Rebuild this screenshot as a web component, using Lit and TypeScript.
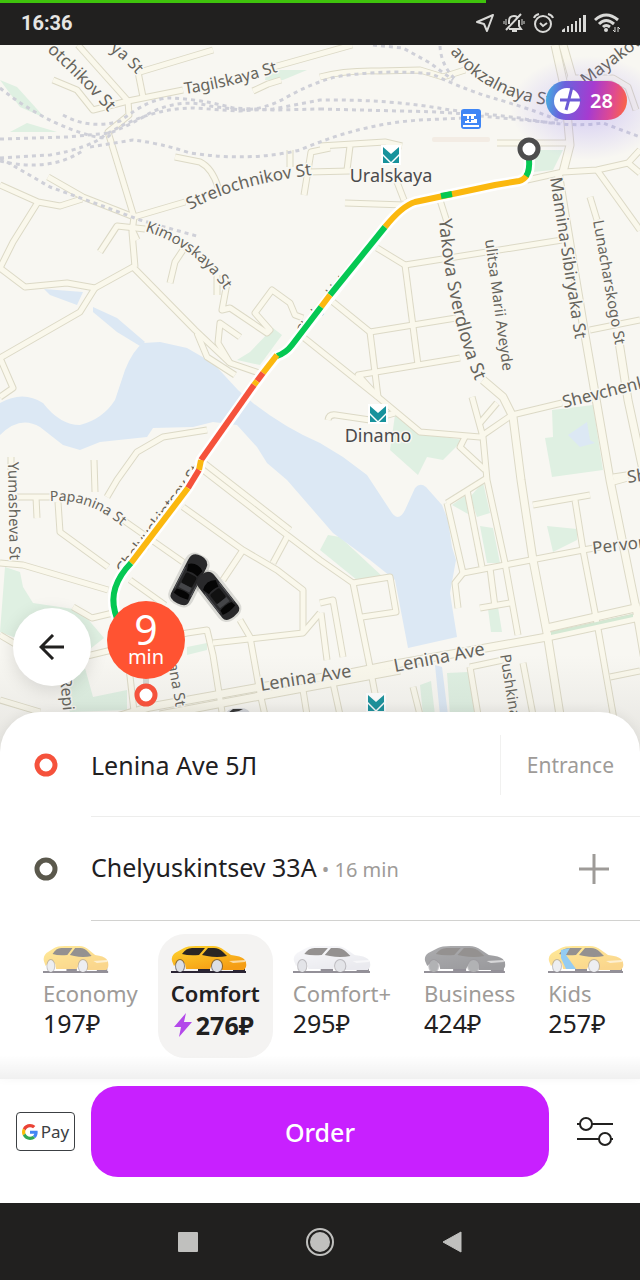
import { LitElement, html, svg, css } from "lit";
import { customElement, property, state } from "lit/decorators.js";

/* ---------- map data ---------- */

const MINOR: string[] = [
  "M53 80 L77 90 L93 110 L128 101 L183 90",
  "M78 45 L128 101",
  "M140 72 L213 50",
  "M138 72 L143 97",
  "M270 68 L320 54 L352 45",
  "M253 91 L268 84 L281 80",
  "M128 101 L129 115 L108 132 L134 217 L185 202",
  "M134 217 L132 232 L135 267",
  "M0 185 L38 202 L60 206 L82 199",
  "M48 177 L83 197 L134 217",
  "M38 202 L13 242 L0 268",
  "M100 252 L117 226 L145 229",
  "M130 225 L137 240",
  "M175 157 L200 162 Q212 168 218 187",
  "M290 150 L290 167",
  "M330 148 L311 152 L304 195",
  "M308 172 L350 171",
  "M320 146 L385 142 L402 146",
  "M350 146 L347 170",
  "M320 77 Q345 70 380 71 L420 70 L443 77 L465 70",
  "M568 78 L613 78 L628 87 L636 110",
  "M497 143 L567 143",
  "M527 180 L563 172 L597 170 L628 163 L640 150",
  "M628 163 L640 173",
  "M597 170 L640 230",
  "M590 197 L597 220",
  "M345 203 L405 205",
  "M397 182 L404 200",
  "M440 200 L447 222",
  "M377 248 L405 265 L562 240",
  "M405 265 L418 365",
  "M333 302 L370 332 L456 318",
  "M370 332 L378 397",
  "M378 397 L358 375 L460 358",
  "M303 337 L378 397 L420 432 L480 437 L512 415",
  "M512 415 L562 403",
  "M472 397 L483 437 L487 480 L505 563 L518 635",
  "M480 423 L497 403",
  "M465 437 L460 447 L485 470",
  "M328 420 Q329 414 336 415 L370 420 L395 413",
  "M590 330 L640 320",
  "M613 477 L640 473",
  "M0 268 L25 287 L67 283 L95 288 L133 267 L195 330 L230 363 L262 374",
  "M95 288 L80 312 L0 358 L13 388 L0 397",
  "M197 333 L207 357 L235 375",
  "M170 283 L175 262 L183 250",
  "M217 295 L217 275",
  "M227 283 L222 310 L230 308 L267 333 L270 330 L255 313 L272 290 L290 303 L295 315 L303 318",
  "M230 363 L218 343 L220 323 L240 337",
  "M207 430 L163 437 L137 452 L117 480 L107 497",
  "M94 460 L95 492",
  "M17 497 L50 497",
  "M36 497 L37 518",
  "M58 502 L60 532 L108 567",
  "M11 457 L11 470",
  "M123 520 L183 562",
  "M183 507 L243 550 L277 570 L303 590 L303 633",
  "M203 470 L287 535 L320 560 L353 583 L370 667 L379 715",
  "M204 463 L290 530",
  "M353 583 L390 577 L396 612 L362 617",
  "M287 537 L273 563",
  "M243 550 L223 580",
  "M0 563 L23 565 L108 590",
  "M130 580 L165 605",
  "M73 607 L92 618 L113 613",
  "M0 635 L17 645",
  "M83 657 L120 648 L187 633 L207 630 L213 655 L222 712",
  "M213 643 L303 633 L320 613",
  "M240 620 L250 637 L260 693 L266 720",
  "M127 650 L135 720",
  "M447 503 L487 478",
  "M447 503 L463 573 L583 550 L600 547",
  "M467 490 L482 567",
  "M463 573 L455 583 L458 608",
  "M490 568 L495 607",
  "M480 608 L510 603",
  "M533 505 L590 495",
  "M575 500 L583 550 L597 623 L615 725",
  "M610 677 L640 671",
  "M470 667 L503 660",
  "M470 667 L478 715",
  "M523 663 L533 715",
  "M413 687 L420 715",
  "M320 603 L333 600 L343 657",
  "M321 613 L327 660",
  "M333 683 L340 715",
  "M303 690 L307 715",
  "M0 700 L40 712",
  "M610 483 L628 478",
];

const MAJOR: string[] = [
  "M555 45 L565 90 L570 145 L563 172",
  "M563 45 L573 80",
  "M558 172 L585 335 L610 480 L637 613 L645 660",
  "M618 335 L628 400 L643 470",
  "M483 380 L503 397 L513 417 L521 480 L533 560 L547 633 L560 715",
  "M100 722 L150 707 L260 687 L350 673 L390 665 L480 649 L547 637 L640 617",
  "M547 628 L640 607",
  "M160 715 L260 696 L400 670",
];

const RAILS: string[] = [
  "M0 88 Q37 117 73 130 T110 134",
  "M63 115 Q90 130 120 121 Q150 98 170 98 Q200 99 233 108 L273 110 L320 109",
  "M0 139 L67 137 L110 133 Q130 125 150 113 Q180 98 210 106 L240 110 Q265 110 287 97 Q310 84 335 77 Q385 69 432 74 Q470 92 500 100 Q540 112 562 122",
  "M0 158 L50 155 Q90 148 105 135 Q150 108 193 108 L240 111 L273 109 L320 100 Q390 99 450 110 L520 118 Q570 128 603 123 L640 137",
  "M0 161 Q50 173 84 150",
  "M90 147 L133 140 Q160 143 190 153 Q250 162 300 150 Q360 124 420 120 L465 118",
  "M0 158 L50 187 L100 205 L140 220 L200 237",
  "M320 109 L400 111 Q460 112 480 116 L555 123",
  "M373 45 L403 48 L430 63 L453 80",
  "M440 46 Q441 65 455 79",
];

const PARKS: string[] = [
  "M0 80 L17 87 L45 118 L20 107Z",
  "M10 132 L27 123 L57 132Z",
  "M267 70 L307 70 L283 80 L265 80Z",
  "M537 150 L563 150 L553 170 L533 172Z",
  "M273 328 L282 335 L260 365 L237 360 L250 352Z",
  "M395 415 L420 433 L463 440 L443 460 L427 457 L418 475 L390 450Z",
  "M552 410 L593 405 L603 470 L552 477 L545 438 L553 437Z",
  "M5 567 L20 572 L23 587 L33 603 L80 610 L104 638 L76 660 L0 632Z",
  "M60 693 L85 668 L93 697 L127 690 L127 710 L70 712Z",
  "M187 647 L207 643 L207 650 L187 655Z",
  "M328 535 L340 537 L383 577 L357 580 L320 550Z",
  "M452 505 L466 495 L468 514Z",
  "M470 497 L483 482 L490 513 L477 517Z",
  "M480 526 L493 528 L500 563 L487 563Z",
  "M547 526 L577 529 L577 540 L553 552Z",
  "M488 609 L498 607 L502 632 L491 632Z",
  "M447 673 L468 672 L475 715 L450 715Z",
  "M420 685 L431 681 L435 715 L423 715Z",
];

const WATER: string[] = [
  "M0 403 Q23 390 43 403 Q60 425 80 425 Q103 419 115 400 L125 370 Q133 350 143 343 L160 342 L187 348 L213 363 L238 390 L253 403 Q285 428 320 443 L343 457 L367 475 L390 510 Q398 524 405 510 L415 488 Q420 482 426 487 L442 505 L448 520 L452 547 L456 560 L450 593 L457 637 L408 648 L395 580 L370 560 L333 533 L320 518 L287 480 L267 463 L257 447 L237 425 L213 422 L193 427 L153 428 L147 437 L100 442 L80 450 L63 445 L40 427 Q20 415 0 435Z",
  "M44 289 L83 292 L77 305 L50 295Z",
  "M93 307 L117 318 L145 342 L140 346 L117 332 L93 312Z",
  "M435 665 L442 667 L448 715 L440 715Z",
  "M568 435 L587 422 L590 440 L595 443 L580 447Z",
];

const ROUTE_LINE =
  "M529 158 Q531 178 519 181 L495 185 L415 202 Q402 206 385 227 L292 345 Q286 354 277 356 L263 373 L201 460 L199 470 L188 488 L131 563 Q108 587 115 612 L120 628";

const ROUTE: { tone: "green" | "amber" | "red"; d: string }[] = [
  { tone: "amber", d: "M527 175 Q524 180 519 181 L495 185 L415 202 Q402 206 385 227" },
  { tone: "green", d: "M529 158 Q530 171 526 176" },
  { tone: "green", d: "M452 194 L441 196" },
  { tone: "green", d: "M385 227 L330 295" },
  { tone: "amber", d: "M330 295 L321 307" },
  { tone: "green", d: "M321 307 L292 345 Q286 353 277 356" },
  { tone: "amber", d: "M277 355 L263 373" },
  { tone: "red", d: "M263 373 L257 381" },
  { tone: "amber", d: "M257 381 L254 385" },
  { tone: "red", d: "M254 385 L201 460" },
  { tone: "amber", d: "M201 460 L199 470" },
  { tone: "red", d: "M199 470 L188 488" },
  { tone: "amber", d: "M188 488 L131 563" },
  { tone: "green", d: "M131 563 Q108 587 115 612 L120 628" },
];

const STREETS: { id: string; d: string; size: number; text: string }[] = [
  { id: "s1", d: "M47 51 Q75 76 114 118", size: 17, text: "otchikov St" },
  { id: "s2", d: "M110 51 Q126 60 148 88", size: 16, text: "ya St" },
  { id: "s3", d: "M185 94 Q240 86 300 64", size: 16, text: "Tagilskaya St" },
  { id: "s4", d: "M190 210 Q240 182 330 173", size: 17, text: "Strelochnikov St" },
  { id: "s5", d: "M145 231 Q200 248 231 300", size: 15, text: "Kimovskaya St" },
  { id: "s6", d: "M450 52 Q490 104 570 107", size: 17, text: "avokzalnaya St" },
  { id: "s7", d: "M586 86 L652 36", size: 17, text: "Mayakovskogo" },
  { id: "s8", d: "M550 178 L576 345", size: 17, text: "Mamina-Sibiryaka St" },
  { id: "s9", d: "M593 221 L616 350", size: 15, text: "Lunacharskogo St" },
  { id: "s10", d: "M439 219 Q448 325 484 400", size: 18, text: "Yakova Sverdlova St" },
  { id: "s11", d: "M485 240 L504 380", size: 15, text: "ulitsa Marii Aveyde" },
  { id: "s12", d: "M564 408 L660 384", size: 17, text: "Shevchenko" },
  { id: "s13", d: "M628 483 L700 473", size: 17, text: "Shein" },
  { id: "s14", d: "M593 554 L700 541", size: 17, text: "Pervomay" },
  { id: "s15", d: "M8 462 L10 570", size: 15, text: "Yumasheva St" },
  { id: "s16", d: "M50 501 Q95 498 130 534", size: 14, text: "Papanina St" },
  { id: "s17", d: "M261 691 L400 669", size: 18, text: "Lenina Ave" },
  { id: "s18", d: "M395 672 L520 648", size: 18, text: "Lenina Ave" },
  { id: "s19", d: "M500 655 L517 760", size: 15, text: "Pushkina" },
  { id: "s20", d: "M168 664 L180 730", size: 15, text: "ana St" },
  { id: "s21", d: "M60 678 L68 760", size: 16, text: "Repi" },
  { id: "s22", d: "M124 575 L205 466", size: 16, text: "Chelyuskintsev St" },
  { id: "s23", d: "M303 335 L401 210", size: 13, text: "Chelyuskintsev" },
];

const metroMark = (x: number, y: number) => svg`
  <g transform="translate(${x} ${y})">
    <rect class="halo" x="-10" y="-10" width="20" height="20" />
    <path class="metro" d="M-8 -8 L0 -1 L8 -8 V-1 L0 7 L-8 -1Z M-8 1 L-1 8 H-8Z M8 1 L1 8 H8Z" />
  </g>`;

const mapCar = (x: number, y: number, angle: number) => svg`
  <g transform="translate(${x} ${y}) rotate(${angle})">
    <rect class="car-shade" x="-13" y="-28" width="26" height="56" rx="10" />
    <path d="M-10 -18 Q-10 -27 0 -27 Q10 -27 10 -18 V20 Q10 26 0 26 Q-10 26 -10 20Z" fill="#29292b" />
    <path d="M-8 -14 Q0 -20 8 -14 L6 -7 Q0 -9 -6 -7Z" fill="#050505" />
    <rect x="-6" y="-6" width="12" height="12" rx="2" fill="#111" />
    <path d="M-6 6 H6 V11 H-6Z" fill="#444548" />
    <path d="M-7 13 Q0 11 7 13 L8 18 Q0 20 -8 18Z" fill="#050505" />
    <path d="M-9 -10 V14 M9 -10 V14" stroke="#55565a" stroke-width="1" />
  </g>`;

@customElement("city-map")
export class CityMap extends LitElement {
  static styles = css`
    :host { display: block; height: 100%; }
    svg { display: block; width: 100%; height: 100%; }
    .land { fill: #f8f7f2; }
    .water { fill: #dce8f4; }
    .park { fill: #dff0e2; }
    .case, .fill, .rail, .route-case, .route { fill: none; stroke-linejoin: round; }
    .case { stroke: #dcd9c6; stroke-width: 7; }
    .fill { stroke: #faf8ec; stroke-width: 5; }
    .wide.case { stroke-width: 9; }
    .wide.fill { stroke-width: 7; }
    .rail { stroke: #cfd0d8; stroke-width: 3; stroke-dasharray: 4 4; }
    .route-case { stroke: #fff; stroke-width: 11; }
    .route { stroke-width: 6; }
    .green { stroke: #05c853; }
    .amber { stroke: #fbb80f; }
    .red { stroke: #f5523c; }
    text {
      font-family: "Noto Sans", sans-serif; fill: #66645c;
      stroke: #f8f7f2; stroke-width: 3; paint-order: stroke; stroke-linejoin: round;
    }
    .station { font-size: 18px; fill: #4b4a4c; text-anchor: middle; }
    .halo { fill: #fff; }
    .metro { fill: #17929c; }
    .car-shade { fill: #000; opacity: 0.12; }
    .minutes { font-size: 41px; fill: #fff; stroke: none; text-anchor: middle; }
    .unit { font-size: 20px; fill: #fff; stroke: none; text-anchor: middle; }
  `;

  render() {
    return html`<svg viewBox="0 45 640 707" preserveAspectRatio="xMidYMax slice" role="img" aria-label="Route map">
      <rect class="land" x="-400" y="-400" width="1440" height="1600" />
      ${PARKS.map((d) => svg`<path class="park" d=${d} />`)}
      ${WATER.map((d) => svg`<path class="water" d=${d} />`)}
      ${MINOR.map((d) => svg`<path class="case" d=${d} />`)}
      ${MAJOR.map((d) => svg`<path class="case wide" d=${d} />`)}
      ${MINOR.map((d) => svg`<path class="fill" d=${d} />`)}
      ${MAJOR.map((d) => svg`<path class="fill wide" d=${d} />`)}
      <path d="M551 632 L633 614 V617 L551 635Z" fill="#d3e8d3" />
      ${RAILS.map((d) => svg`<path class="rail" d=${d} />`)}
      <defs>
        ${STREETS.map((s) => svg`<path id=${s.id} d=${s.d} />`)}
        <radialGradient id="glow">
          <stop offset="0" stop-color="#8f7af5" stop-opacity="0.35" />
          <stop offset="1" stop-color="#8f7af5" stop-opacity="0" />
        </radialGradient>
        <linearGradient id="fade" x1="0" y1="0" x2="0" y2="1">
          <stop offset="0" stop-color="#777" stop-opacity="0" />
          <stop offset="1" stop-color="#777" stop-opacity="0.14" />
        </linearGradient>
      </defs>
      ${STREETS.map(
        (s) => svg`<text font-size=${s.size}><textPath href="#${s.id}">${s.text}</textPath></text>`,
      )}
      <ellipse cx="588" cy="108" rx="78" ry="52" fill="url(#glow)" />
      <g transform="translate(471 119)">
        <rect x="-10" y="-10" width="20" height="20" rx="3" fill="#3f86f5" />
        <path d="M-8 -5 H5 V-3 H3 V0 H6 V4 H-6 V2 H-4 V-3 H-8Z M-8 6 H8 V8 H-8Z" fill="#fff" />
        <path d="M-2 -3 H0 V3 H-2Z M-4 0 H3 V1 H-4Z" fill="#3f86f5" />
      </g>
      <rect x="432" y="137" width="58" height="5" rx="2" fill="#f3ece4" />
      ${metroMark(391, 155)}
      <text class="station" x="391" y="182">Uralskaya</text>
      ${metroMark(378, 414)}
      <text class="station" x="378" y="442">Dinamo</text>
      ${metroMark(376, 703)}
      <path class="route-case" d=${ROUTE_LINE} />
      ${ROUTE.map((r) => svg`<path class="route ${r.tone}" d=${r.d} />`)}
      <circle cx="529" cy="149" r="9" fill="#fff" stroke="#4d4d4d" stroke-width="5" />
      ${mapCar(189, 580, 27)} ${mapCar(218, 596, -38)}
      <g transform="translate(238 716)">
        <path d="M-13 0 Q-12 -8 0 -8 Q12 -9 13 0Z" fill="#d4d6da" />
        <path d="M-10 -3 L-5 -7 L5 -7 L1 -5Z" fill="#333" />
      </g>
      <rect x="-400" y="655" width="1440" height="97" fill="url(#fade)" />
      <rect x="143" y="674" width="6" height="14" fill="#d3d3cf" />
      <circle cx="146" cy="695" r="9" fill="#fff" stroke="#f5523c" stroke-width="5" />
      <circle cx="146" cy="640" r="39" fill="#ff5332" />
      <text class="minutes" x="146" y="645">9</text>
      <text class="unit" x="146" y="664">min</text>
    </svg>`;
  }
}

/* ---------- tariff car drawing ---------- */

@customElement("taxi-car")
export class TaxiCar extends LitElement {
  @property() body = "#fcc928";
  @property() lower = "#f5a51b";
  @property() wheel = "#dcdfe6";
  @property({ type: Number }) width = 76;
  @property({ type: Boolean }) stripe = false;

  static styles = css`
    :host { display: block; }
    svg { display: block; }
  `;

  render() {
    return html`<svg width=${this.width} height="28" viewBox="0 0 76 28" preserveAspectRatio="none" aria-hidden="true">
      <defs>
        <linearGradient id="g" x1="0" y1="0" x2="0.6" y2="1">
          <stop offset="0.2" stop-color=${this.body} />
          <stop offset="1" stop-color=${this.lower} />
        </linearGradient>
      </defs>
      <path d="M0 26 H75 V28 H0Z" fill="#2a2433" />
      <path d="M27 22 H39 V27 H27Z M62 22 H74 V27 H62Z" fill="#2a2433" />
      <path
        d="M1 16 Q0 11 4 8 L13 3 Q16 1 25 1 H42 Q48 1 53 5 L60 10 Q70 11 73 14 Q76 17 75 22 L73 25 H51 L50 20 Q46 12 41 20 L39 24 H15 L14 19 Q9 12 5 19 L3 21Z"
        fill="url(#g)"
      />
      <path d="M11 9 Q15 3 21 3 H34 L28 10 Q18 11 11 9Z M37 3 H43 Q48 3 52 7 L56 11 Q46 13 36 11 L31 10Z" fill="#2b2623" />
      <path d="M58 16 L74 15 V17 L62 18Z" fill="#fff" opacity="0.6" />
      ${this.stripe ? svg`<path d="M13 5 L22 3 L18 10 L28 24 H18 L13 13Z" fill="#2c9be8" />` : ""}
      <ellipse cx="9" cy="21" rx="5" ry="7" fill="#3a3640" opacity="0.6" />
      <ellipse cx="9" cy="21" rx="4" ry="6" fill=${this.wheel} />
      <ellipse cx="46" cy="21" rx="6" ry="7" fill="#3a3640" opacity="0.6" />
      <ellipse cx="46" cy="21" rx="5" ry="6" fill=${this.wheel} />
    </svg>`;
  }
}

interface Tariff {
  id: string; name: string; price: string; body: string; lower: string; wheel: string; width: number;
  stripe?: boolean; surge?: boolean;
}

const TARIFFS: Tariff[] = [
  { id: "economy", name: "Economy", price: "197", body: "#ffcf30", lower: "#f7ae1c", wheel: "#dcdfe6", width: 66 },
  { id: "comfort", name: "Comfort", price: "276", body: "#fdca2a", lower: "#f59d14", wheel: "#dcdfe6", width: 76, surge: true },
  { id: "plus", name: "Comfort+", price: "295", body: "#eeeef4", lower: "#d6d7e0", wheel: "#c8cad2", width: 78 },
  { id: "business", name: "Business", price: "424", body: "#55555a", lower: "#3a3a40", wheel: "#66676c", width: 82 },
  { id: "kids", name: "Kids", price: "257", body: "#ffcf30", lower: "#f7ae1c", wheel: "#dcdfe6", width: 76, stripe: true },
];

@customElement("app-root")
export class AppRoot extends LitElement {
  @state() private selected = "comfort";

  static styles = css`
    :host {
      display: flex; flex-direction: column; min-height: 100vh; background: #fff;
      font-family: "Noto Sans", sans-serif; color: #21201f;
    }
    * { box-sizing: border-box; }
    button { font: inherit; color: inherit; background: none; border: 0; padding: 0; cursor: pointer; }
    svg { display: block; }

    .status { background: #21201f; color: #e6e6e4; height: 45px; flex: none; display: flex; flex-direction: column; }
    .progress { height: 3px; width: 76%; background: #3fc20c; }
    .status-row { flex: 1; display: flex; align-items: center; justify-content: space-between; padding: 0 19px 2px 21px; }
    .clock { font: 700 20px/24px Roboto, sans-serif; }
    .status-icons { display: flex; align-items: center; gap: 8px; }

    .map { position: relative; flex: 1 0 400px; min-height: 0; }
    .map city-map { position: absolute; inset: 0; }
    .plus {
      position: absolute; top: 36px; right: 13px; width: 81px; height: 39px; border-radius: 20px;
      display: flex; align-items: center; gap: 9px; padding: 0 7px; color: #fff;
      background: linear-gradient(100deg, #3fb8e0 0%, #6b62dc 22%, #a63bd0 55%, #e04a90 80%, #ff6a38 100%);
      font-size: 20px; font-weight: 600;
    }
    .back {
      position: absolute; left: 13px; bottom: 66px; width: 78px; height: 78px; border-radius: 50%;
      background: #fff; display: grid; place-items: center; box-shadow: 0 4px 18px rgba(0, 0, 0, 0.12);
    }

    .sheet {
      position: relative; margin-top: -40px; padding-top: 1px; background: #fff; border-radius: 40px 40px 0 0;
      box-shadow: 0 -2px 12px rgba(0, 0, 0, 0.06); flex: none;
    }
    .row { display: flex; align-items: center; height: 104px; }
    .dot { flex: none; width: 91px; padding-left: 34px; }
    .line { flex: 1; align-self: stretch; display: flex; align-items: center; border-bottom: 1px solid #ededec; }
    .row.last .line { border-bottom-color: #d2d2d0; }
    .address { flex: 1; text-align: left; font-size: 25px; line-height: 32px; }
    .eta { font-size: 20px; color: #9e9b98; }
    .entrance {
      height: 60px; padding: 0 26px; border-left: 1px solid #f1f1f0; font-size: 21px; color: #9e9b98;
    }
    .add { width: 92px; display: grid; place-items: center; align-self: stretch; }

    .tariffs {
      position: relative; display: flex; gap: 7px; height: 158px; padding: 13px 0 0 30px; margin: 0; border: 0;
      overflow: hidden; min-width: 0;
    }
    .tariffs::after {
      content: ""; position: absolute; left: 0; right: 0; bottom: 0; height: 24px; pointer-events: none;
      background: linear-gradient(rgba(0, 0, 0, 0), rgba(0, 0, 0, 0.06));
    }
    .tariff {
      flex: none; height: 124px; border-radius: 27px; padding: 11px 13px 0; cursor: pointer; position: relative;
    }
    .tariff input { position: absolute; opacity: 0; margin: 0; }
    .tariff taxi-car { opacity: 0.5; }
    .name { display: block; margin-top: 6px; font-size: 22px; line-height: 28px; color: #9e9b98; }
    .price { display: flex; align-items: center; font-size: 25px; line-height: 32px; }
    .tariff.on { background: #f4f3f2; }
    .tariff.on taxi-car { opacity: 1; }
    .tariff.on .name { color: #21201f; font-weight: 600; }
    .tariff.on .price { font-weight: 700; gap: 3px; padding: 2px 0 0 2px; }

    .footer { display: flex; align-items: center; background: #fff; padding: 7px 0 26px; flex: none; }
    .pay { flex: none; width: 91px; padding: 0 16px; }
    .gpay {
      display: flex; align-items: center; justify-content: center; gap: 3px; height: 39px; border: 1px solid #3c4043;
      border-radius: 4px; font-size: 17px; color: #3c4043;
    }
    .order {
      flex: 1; height: 91px; border-radius: 27px; background: #c820ff; color: #fff; font-size: 25px; font-weight: 500;
    }
    .options { flex: none; width: 91px; height: 91px; display: grid; place-items: center; }

    .nav { background: #21201f; height: 77px; flex: none; display: flex; align-items: center; justify-content: center; gap: 92px; }
    .nav button { width: 40px; height: 40px; display: grid; place-items: center; }
  `;

  private renderStatus() {
    return html`<header class="status">
      <div class="progress"></div>
      <div class="status-row">
        <span class="clock">16:36</span>
        <div class="status-icons">
          <svg width="20" height="20" viewBox="0 0 20 20" fill="none" stroke="#d9d9d7" stroke-width="2" stroke-linejoin="round">
            <path d="M18 2 L2 9 L9 11 L12 18Z" />
          </svg>
          <svg width="22" height="20" viewBox="0 0 22 20" fill="none" stroke="#d9d9d7" stroke-width="2">
            <path d="M6 11 V8 Q6 3 11 3 Q13 3 14 4 M16 7 V13 L18 16 H6 M9 18 H14 M18 1 L3 17" />
            <path d="M3 6 V12 M19 6 V12 M1 8 V11 M21 8 V11" stroke-width="1" />
          </svg>
          <svg width="21" height="22" viewBox="0 0 21 22" fill="none" stroke="#d9d9d7" stroke-width="2">
            <circle cx="10" cy="12" r="8" />
            <path d="M7 11 L10 14 L14 11 M1 6 Q2 3 6 2 M20 6 Q19 3 15 2" />
          </svg>
          <svg width="24" height="18" viewBox="0 0 24 18" fill="#d9d9d7">
            <path d="M0 18 V16 L3 14 V18Z M5 12 H7 V18 H5Z M9 10 H11 V18 H9Z M13 7 H15 V18 H13Z M17 4 H19 V18 H17Z M21 1 H24 V18 H21Z" />
          </svg>
          <svg width="27" height="20" viewBox="0 0 27 20" fill="none" stroke="#d9d9d7" stroke-width="3">
            <path d="M1 7 Q12 -3 24 7 M5 11 Q12 4 20 11 M9 14 Q12 11 16 14" />
            <circle cx="12" cy="17" r="2" fill="#d9d9d7" stroke="none" />
            <path d="M21 14 V19 M24 14 V19 M19 17 L21 19 M24 14 L26 16" stroke-width="1" />
          </svg>
        </div>
      </div>
    </header>`;
  }

  private ring(color: string) {
    return html`<span class="dot"><svg width="24" height="24" viewBox="0 0 24 24" aria-hidden="true">
      <circle cx="12" cy="12" r="9" fill="none" stroke=${color} stroke-width="5" />
    </svg></span>`;
  }

  private renderTariff(t: Tariff) {
    const on = t.id === this.selected;
    return html`<label class="tariff ${on ? "on" : ""}">
      <input type="radio" name="tariff" .checked=${on} @change=${() => (this.selected = t.id)} />
      <taxi-car .body=${t.body} .lower=${t.lower} .wheel=${t.wheel} .width=${t.width} .stripe=${!!t.stripe}></taxi-car>
      <span class="name">${t.name}</span>
      <span class="price">
        ${t.surge
          ? html`<svg width="20" height="26" viewBox="0 0 20 26" aria-hidden="true">
              <path d="M13 1 L1 15 H8 L6 25 L19 10 H11Z" fill="#b348ea" />
            </svg>`
          : ""}
        <span>${t.price}₽</span>
      </span>
    </label>`;
  }

  render() {
    return html`
      ${this.renderStatus()}
      <section class="map">
        <city-map></city-map>
        <button class="plus" aria-label="Plus points: 28">
          <svg width="28" height="28" viewBox="0 0 28 28" aria-hidden="true">
            <circle cx="14" cy="14" r="13" fill="#fff" />
            <path d="M19 0 L16 12 L13 23 M7 13 H28" fill="none" stroke="#6c5bd6" stroke-width="3" />
          </svg>
          <span>28</span>
        </button>
        <button class="back" aria-label="Back">
          <svg width="26" height="26" viewBox="0 0 26 26" fill="none" stroke="#21201f" stroke-width="3">
            <path d="M25 13 H2 M14 1 L2 13 L14 25" />
          </svg>
        </button>
      </section>
      <main class="sheet">
        <div class="row">
          ${this.ring("#f5523c")}
          <div class="line">
            <button class="address">Lenina Ave 5Л</button>
            <button class="entrance">Entrance</button>
          </div>
        </div>
        <div class="row last">
          ${this.ring("#5a584c")}
          <div class="line">
            <button class="address">Chelyuskintsev 33A<span class="eta"> • 16 min</span></button>
            <button class="add" aria-label="Add stop">
              <svg width="30" height="30" viewBox="0 0 30 30" stroke="#9e9b98" stroke-width="3">
                <path d="M15 0 V30 M0 15 H30" />
              </svg>
            </button>
          </div>
        </div>
        <fieldset class="tariffs" aria-label="Tariff">${TARIFFS.map((t) => this.renderTariff(t))}</fieldset>
      </main>
      <footer class="footer">
        <button class="pay" aria-label="Google Pay">
          <span class="gpay">
            <svg width="16" height="16" viewBox="0 0 48 48" aria-hidden="true">
              <path fill="#EA4335" d="M24 9.500c3.540 0 6.710 1.220 9.210 3.600l6.850-6.850C35.900 2.380 30.470 0 24 0 14.620 0 6.510 5.380 2.560 13.220l7.980 6.190C12.430 13.720 17.740 9.500 24 9.500z" />
              <path fill="#4285F4" d="M46.980 24.550c0-1.570-.15-3.090-.38-4.550H24v9.020h12.940c-.58 2.960-2.260 5.480-4.780 7.180l7.730 6c4.510-4.180 7.090-10.360 7.090-17.650z" />
              <path fill="#FBBC05" d="M10.530 28.590c-.48-1.450-.76-2.990-.76-4.590s.27-3.140.76-4.590l-7.980-6.190C.92 16.460 0 20.120 0 24c0 3.880.92 7.540 2.560 10.780l7.970-6.190z" />
              <path fill="#34A853" d="M24 48c6.480 0 11.930-2.130 15.890-5.810l-7.730-6c-2.150 1.450-4.920 2.300-8.160 2.300-6.260 0-11.570-4.220-13.470-9.910l-7.980 6.190C6.510 42.620 14.620 48 24 48z" />
            </svg>
            <span>Pay</span>
          </span>
        </button>
        <button class="order">Order</button>
        <button class="options" aria-label="Trip options">
          <svg width="36" height="30" viewBox="0 0 36 30" fill="none" stroke="#21201f" stroke-width="2">
            <path d="M0 7 H3 M15 7 H36 M0 22 H22 M34 22 H36" />
            <circle cx="9" cy="7" r="6" />
            <circle cx="28" cy="22" r="6" />
          </svg>
        </button>
      </footer>
      <nav class="nav">
        <button aria-label="Recent apps">
          <svg width="20" height="20" viewBox="0 0 20 20"><rect width="20" height="20" rx="1" fill="#c0c0be" /></svg>
        </button>
        <button aria-label="Home">
          <svg width="30" height="30" viewBox="0 0 30 30">
            <circle cx="15" cy="15" r="13" fill="none" stroke="#c0c0be" stroke-width="2" />
            <circle cx="15" cy="15" r="10" fill="#c0c0be" />
          </svg>
        </button>
        <button aria-label="Back">
          <svg width="20" height="22" viewBox="0 0 20 22"><path d="M1 11 L19 1 V21Z" fill="#c0c0be" stroke="#c0c0be" stroke-linejoin="round" /></svg>
        </button>
      </nav>
    `;
  }
}
